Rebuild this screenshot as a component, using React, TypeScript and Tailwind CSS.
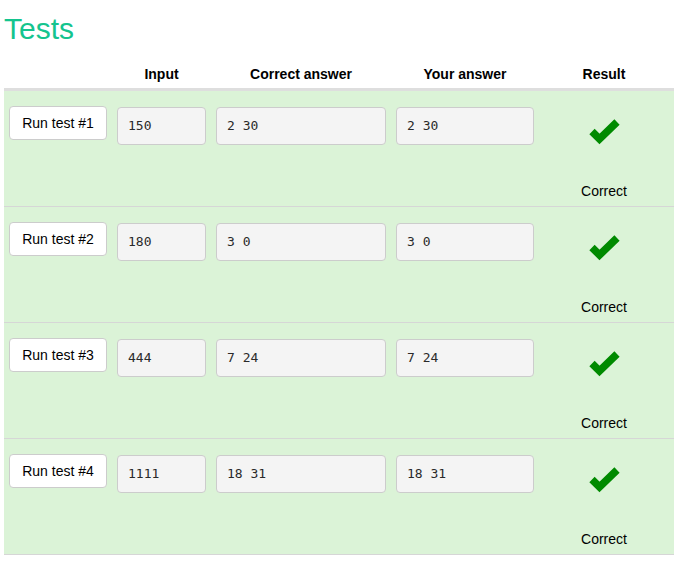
import React from "react";

const rows = [
  { n: 1, input: "150", correct: "2 30", yours: "2 30" },
  { n: 2, input: "180", correct: "3 0", yours: "3 0" },
  { n: 3, input: "444", correct: "7 24", yours: "7 24" },
  { n: 4, input: "1111", correct: "18 31", yours: "18 31" },
];

const cols = "grid grid-cols-[108px_99px_180px_148px_1fr]";
const mono = { fontFamily: '"DejaVu Sans Mono", monospace' };

function Check() {
  return (
    <svg width="31" height="27" viewBox="0 0 31 27" className="block">
      <polyline
        points="3,13.5 10.5,21 28,4"
        fill="none"
        stroke="#008a00"
        strokeWidth="7.5"
        strokeLinejoin="miter"
        strokeLinecap="butt"
      />
    </svg>
  );
}

function Box({ text }: { text: string }) {
  return (
    <div className="px-[5px] pt-[16px]">
      <div
        className="h-[38px] bg-[#f4f4f4] border border-[#cccccc] rounded-[4px] pl-[10px] flex items-center text-[13px] text-[#2a2a2a]"
        style={mono}
      >
        {text}
      </div>
    </div>
  );
}

export default function App() {
  return (
    <div
      className="w-[681px] h-[563px] bg-white pl-[4px] pr-[7px] overflow-hidden text-black"
      style={{ fontFamily: '"Liberation Sans", Arial, sans-serif' }}
    >
      <h1 className="text-[30px] leading-[33px] pt-[12px] text-[#14c48e] font-normal">Tests</h1>
      <div className={`${cols} h-[46px] items-end pb-[3px] border-b-[3px] border-[#dedede] text-[14px] font-bold`}>
        <div></div>
        <div className="text-center">Input</div>
        <div className="text-center">Correct answer</div>
        <div className="text-center">Your answer</div>
        <div className="text-center pr-[5px]">Result</div>
      </div>
      {rows.map((r) => (
        <div
          key={r.n}
          className={`${cols} h-[116px] bg-[#dbf3d7] border-b border-[#d6d6d6] items-start`}
        >
          <div className="px-[5px] pt-[15px]">
            <button className="h-[34px] w-[98px] bg-white border border-[#cccccc] rounded-[4px] text-[14px] leading-none">
              Run test #{r.n}
            </button>
          </div>
          <Box text={r.input} />
          <Box text={r.correct} />
          <Box text={r.yours} />
          <div className="flex flex-col items-center pt-[27px] pr-[5px]">
            <Check />
            <div className="mt-[38px] text-[14px] leading-[16px]">Correct</div>
          </div>
        </div>
      ))}
    </div>
  );
}
